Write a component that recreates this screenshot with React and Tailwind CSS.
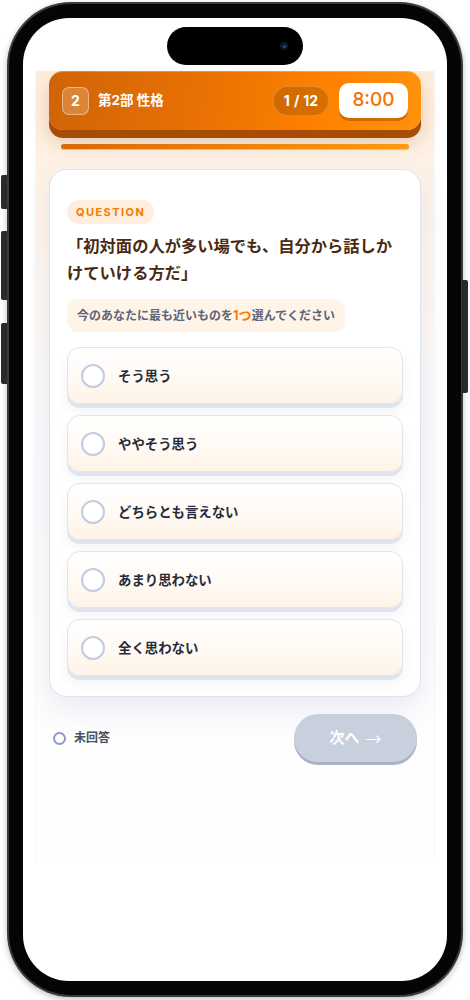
import React from "react";

const options = ["そう思う", "ややそう思う", "どちらとも言えない", "あまり思わない", "全く思わない"];

export default function App() {
  return (
    <div
      className="relative w-[470px] h-[1000px] bg-white overflow-hidden"
      style={{ fontFamily: 'Inter, "Noto Sans CJK JP", "Noto Sans", sans-serif' }}
    >
      {/* side buttons */}
      <div className="absolute left-[1px] top-[175px] w-[6px] h-[34px] rounded-l-[2px] bg-[#2a2a2c]" />
      <div className="absolute left-[1px] top-[231px] w-[6px] h-[69px] rounded-l-[2px] bg-[#2a2a2c]" />
      <div className="absolute left-[1px] top-[323px] w-[6px] h-[61px] rounded-l-[2px] bg-[#2a2a2c]" />
      <div className="absolute right-[2px] top-[280px] w-[6px] h-[113px] rounded-r-[2px] bg-[#2a2a2c]" />

      <div className="ml-[7px] mt-[2px] w-[456px] h-[995px] rounded-[64px] bg-[#3a3b3d] p-[2px] shadow-[0_2px_6px_rgba(0,0,0,0.25)]">
        <div className="h-full rounded-[62px] bg-[#050505] p-[14px]">
          <div className="relative h-full rounded-[46px] bg-white overflow-hidden">
            {/* dynamic island */}
            <div className="absolute left-[144px] top-[9px] w-[136px] h-[38px] rounded-full bg-black flex items-center justify-end pr-[15px] z-10">
              <div className="w-[8px] h-[8px] rounded-full bg-[#0d1a2e] flex items-center justify-center">
                <div className="w-[3px] h-[3px] rounded-full bg-[#1d4f8a]" />
              </div>
            </div>

            <div className="pt-[53px] px-[12px]">
              <div className="w-[400px] h-[790px] bg-[linear-gradient(180deg,#fdeddc_0%,#fff6ee_22%,#fbfbfd_45%,#ffffff_100%)] border-x border-[#f6f7fb] px-[13px]">
                {/* header */}
                <div className="h-[59px] rounded-[14px] bg-[linear-gradient(100deg,#cf6407_0%,#ec7203_45%,#ff8300_75%,#ff920c_100%)] shadow-[0_8px_0_#a64c05,0_12px_18px_rgba(160,80,10,0.25),inset_0_1px_0_rgba(255,255,255,0.25)] flex items-center pl-[13px] pr-[13px]">
                  <div className="w-[27px] h-[28px] rounded-[7px] bg-white/20 border border-white/40 flex items-center justify-center text-white font-bold text-[14px]">
                    2
                  </div>
                  <div className="ml-[9px] text-white font-bold text-[13.5px]">第2部 性格</div>
                  <div className="ml-auto w-[56px] h-[30px] rounded-full bg-black/15 border border-white/20 flex items-center justify-center text-white font-bold text-[14px] gap-[4px]">
                    <span>1</span>
                    <span>/</span>
                    <span>12</span>
                  </div>
                  <div className="ml-[10px] w-[69px] h-[35px] rounded-[10px] bg-white shadow-[0_3px_0_rgba(150,70,0,0.45)] flex items-center justify-center text-[#f57200] font-medium text-[19px]">
                    8:00
                  </div>
                </div>

                {/* progress */}
                <div className="mt-[14px] mx-[12px] h-[5px] rounded-full bg-[linear-gradient(90deg,#d86908,#ff9a10)] shadow-[0_1px_0_#b9c4df]" />

                {/* card */}
                <div className="mt-[20px] rounded-[18px] bg-white border border-[#dde3f0] shadow-[0_12px_30px_rgba(90,100,140,0.12)] pt-[28px] px-[17px] pb-[20px]">
                  <div className="inline-flex h-[24px] items-center rounded-full bg-[#ffeedd] px-[9px] text-[#f57c00] font-bold text-[11px] tracking-[0.13em]">
                    QUESTION
                  </div>
                  <div className="mt-[9px] text-[16.3px] leading-[27px] font-bold text-[#4a2a12]">
                    「初対面の人が多い場でも、自分から話しかけていける方だ」
                  </div>
                  <div className="mt-[12px] inline-flex h-[33px] items-center rounded-[11px] bg-[#fff4e8] px-[10px] text-[12px] font-bold text-[#5e6479]">
                    今のあなたに最も近いものを<span className="text-[#ff7a00] text-[13px]">1つ</span>選んでください
                  </div>
                  <div className="mt-[15px] flex flex-col gap-[11px]">
                    {options.map((o) => (
                      <div
                        key={o}
                        className="h-[57px] rounded-[13px] border border-[#dfe5f0] bg-[linear-gradient(180deg,#ffffff_0%,#fffaf4_55%,#fff3e6_100%)] shadow-[0_4px_0_#dfe4ee,0_8px_14px_rgba(30,40,80,0.05)] flex items-center pl-[13px]"
                      >
                        <div className="w-[24px] h-[24px] rounded-full border-[2.5px] border-[#c3cbe0] bg-white" />
                        <div className="ml-[13px] text-[13.4px] font-bold text-[#262a3a]">{o}</div>
                      </div>
                    ))}
                  </div>
                </div>

                {/* footer */}
                <div className="mt-[17px] flex items-center px-[4px]">
                  <div className="w-[13px] h-[13px] rounded-full border-[2.5px] border-[#8d9bc4]" />
                  <div className="ml-[8px] text-[12px] font-bold text-[#4a5060]">未回答</div>
                  <div className="ml-auto w-[123px] h-[48px] rounded-full bg-[#c9d0dd] shadow-[0_3px_0_#aab3c6] flex items-center justify-center gap-[6px] text-white text-[15px]">
                    <span className="font-bold">次へ</span>
                    <span className="font-normal text-[16px]" style={{ fontFamily: '"Noto Sans CJK JP", sans-serif' }}>→</span>
                  </div>
                </div>
              </div>
            </div>
          </div>
        </div>
      </div>
    </div>
  );
}
